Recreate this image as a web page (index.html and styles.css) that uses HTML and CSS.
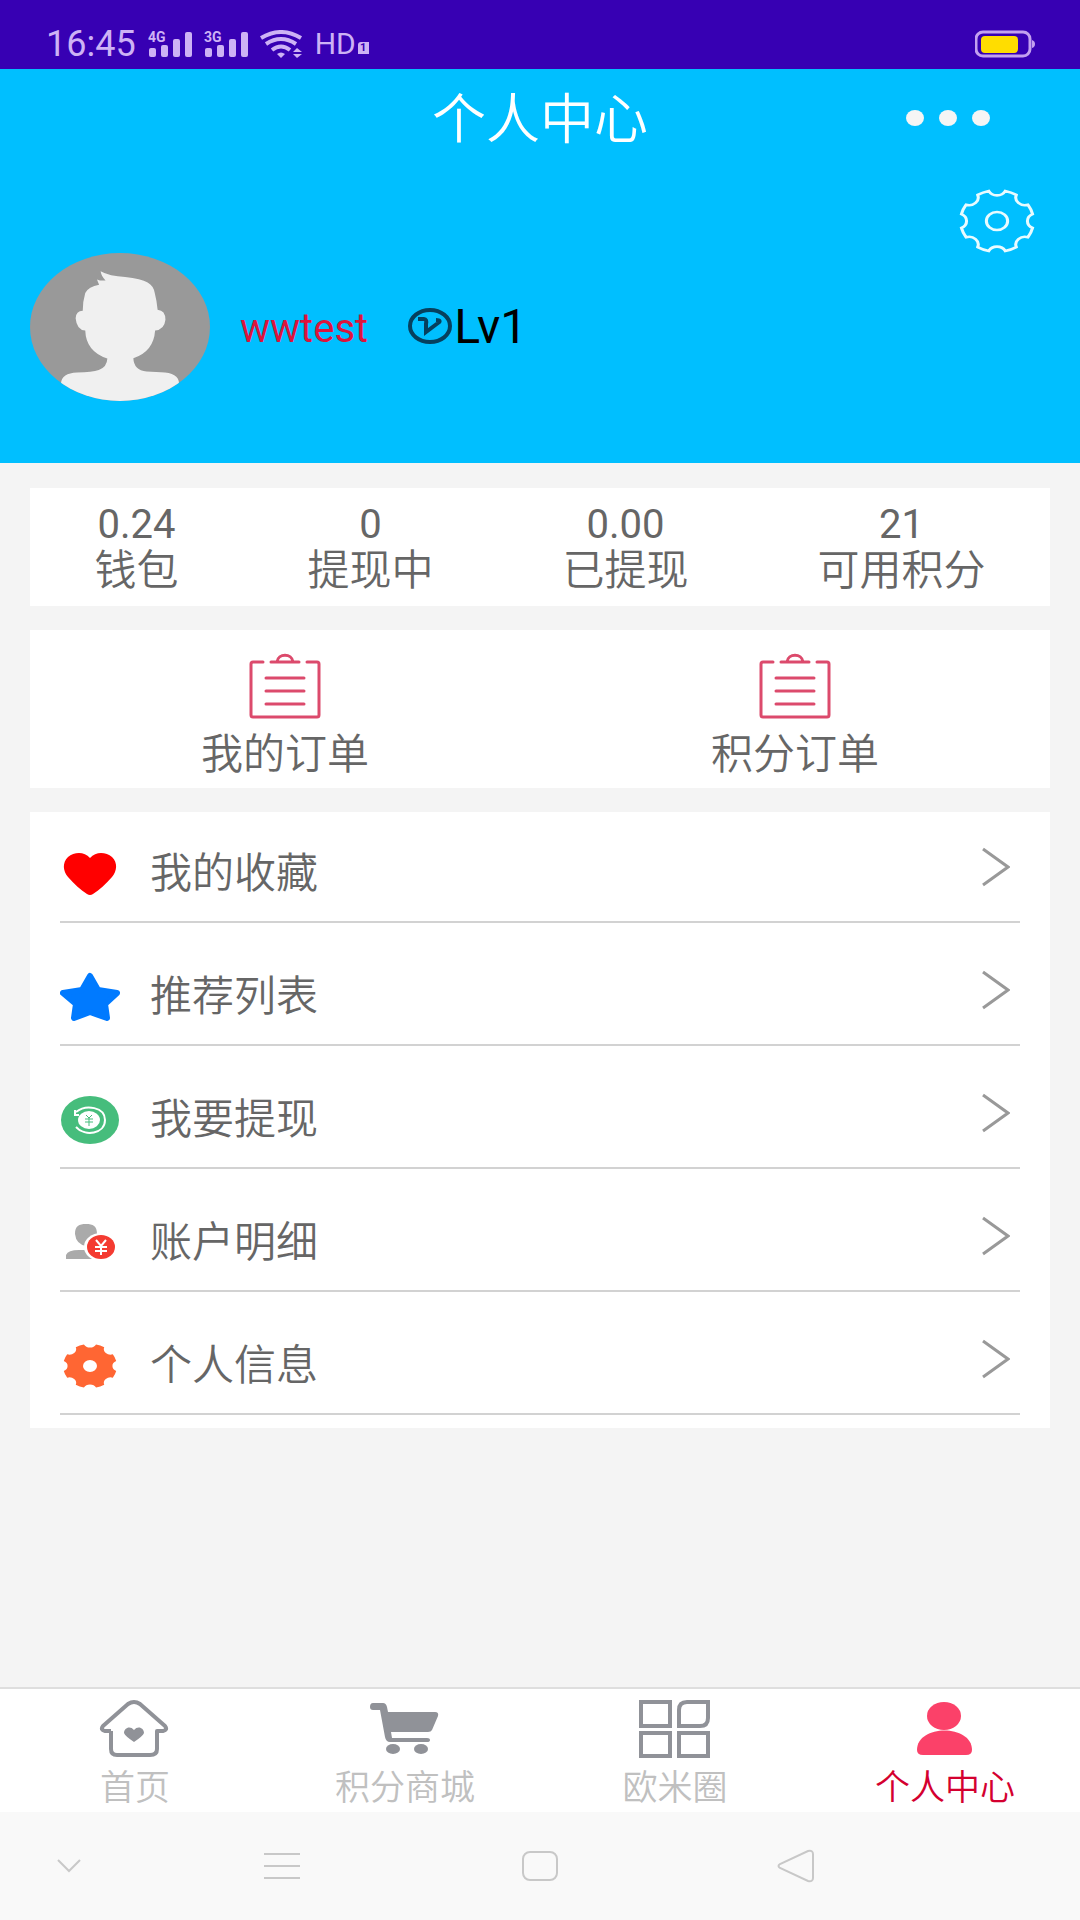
FILE: index.html
```html
<!DOCTYPE html>
<html lang="zh-CN">
<head>
<meta charset="utf-8">
<meta name="viewport" content="width=device-width, initial-scale=1">
<title>个人中心</title>
<link rel="stylesheet" href="styles.css">
</head>
<body>
<svg class="defs" aria-hidden="true">
  <symbol id="gear" viewBox="0 0 100 100" preserveAspectRatio="none">
    <path d="M60.8 3.2A48 48 0 0 1 75.4 9.3A12 12 0 0 0 90.7 24.6A48 48 0 0 1 96.8 39.2A12 12 0 0 0 96.8 60.8A48 48 0 0 1 90.7 75.4A12 12 0 0 0 75.4 90.7A48 48 0 0 1 60.8 96.8A12 12 0 0 0 39.2 96.8A48 48 0 0 1 24.6 90.7A12 12 0 0 0 9.3 75.4A48 48 0 0 1 3.2 60.8A12 12 0 0 0 3.2 39.2A48 48 0 0 1 9.3 24.6A12 12 0 0 0 24.6 9.3A48 48 0 0 1 39.2 3.2A12 12 0 0 0 60.8 3.2Z"/>
    <circle cx="50" cy="50" r="14"/>
  </symbol>
  <symbol id="clipboard" viewBox="0 0 72 66">
    <g fill="none" stroke="#dc4a6c" stroke-width="3" stroke-linecap="round" stroke-linejoin="round">
      <path d="M14 9H4Q2 9 2 11V62Q2 64 4 64H68Q70 64 70 62V11Q70 9 68 9H58M22 9H50M28 9C29 0 43 0 44 9M17 25H55M17 38H55M17 51H55"/>
    </g>
  </symbol>
  <symbol id="chevron" viewBox="0 0 28 40">
    <path d="M1 2L26 20L1 38" fill="none" stroke="#999" stroke-width="3"/>
  </symbol>
  <symbol id="signal" viewBox="0 0 44 28">
    <rect x="1" y="18" width="7" height="9" rx="2"/>
    <rect x="13" y="15" width="7" height="12" rx="2"/>
    <rect x="25" y="9" width="7" height="18" rx="2"/>
    <rect x="37" y="2" width="7" height="25" rx="2"/>
  </symbol>
</svg>

<header class="statusbar">
  <div class="status-left">
    <span class="clock">16:45</span>
    <svg class="signal" width="44" height="28" role="img" aria-label="4G"><use href="#signal"/><text x="0" y="12">4G</text></svg>
    <svg class="signal" width="44" height="28" role="img" aria-label="3G"><use href="#signal"/><text x="0" y="12">3G</text></svg>
    <svg class="wifi" width="43" height="28" viewBox="0 0 43 28" aria-label="Wi-Fi">
      <g fill="none" stroke="currentColor" stroke-width="4">
        <path d="M1 8Q21 -4 41 8M6 14Q21 4 36 14M12 20Q21 13 30 20"/>
      </g>
      <path d="M17 24Q21 21 25 24L21 28ZM33 22L37 18L42 22ZM33 24H42L37 28Z" fill="currentColor"/>
    </svg>
    <span class="hd">HD<span class="hd-slot">1</span></span>
  </div>
  <svg class="battery" width="60" height="28" viewBox="0 0 60 28" role="img" aria-label="电量">
    <rect x="1" y="2" width="54" height="24" rx="7" fill="none" stroke="#c3a0f0" stroke-width="3"/>
    <path d="M57 10Q60 11 60 14Q60 17 57 18Z" fill="#c3a0f0"/>
    <rect x="6" y="6" width="37" height="17" rx="4" fill="#ffdd00"/>
  </svg>
</header>

<section class="profile">
  <div class="titlebar">
    <h1>个人中心</h1>
    <button class="more" type="button" aria-label="更多">
      <svg width="86" height="16" viewBox="0 0 86 16" fill="#f5f5f5"><ellipse cx="10" cy="8" rx="9" ry="8"/><ellipse cx="43" cy="8" rx="9" ry="8"/><ellipse cx="76" cy="8" rx="9" ry="8"/></svg>
    </button>
  </div>
  <button class="settings" type="button" aria-label="设置">
    <svg width="76" height="64"><use href="#gear"/></svg>
  </button>
  <div class="user">
    <svg class="avatar" width="180" height="148" viewBox="83 70 505 443" preserveAspectRatio="none" role="img" aria-label="头像">
      <clipPath id="round"><ellipse cx="335.500" cy="291.500" rx="252.500" ry="221.500"/></clipPath>
      <g clip-path="url(#round)">
        <rect x="83" y="70" width="505" height="443" fill="#999"/>
        <path fill="#f0f0f0" d="M281 125Q306 140 350 142Q395 148 413 158Q430 168 433 190Q439 215 441 240Q463 242 463 270Q460 300 434 302Q430 365 373 385Q374 420 410 425L450 427Q500 428 501 460V520H170V460Q172 430 215 428Q258 426 276 420Q299 412 300 386Q240 365 238 302Q214 300 211 265Q212 244 231 243Q231 215 238 190Q247 170 277 165Q274 158 271 149Q282 154 295 152Q284 142 281 125Z"/>
      </g>
    </svg>
    <span class="username">wwtest</span>
    <span class="level">
      <svg width="44" height="38" viewBox="0 0 44 38" fill="none" stroke="#06405e"><ellipse cx="22" cy="18" rx="20" ry="16" stroke-width="4"/><path d="M10 11H16Q19 11 18 16L18 24L30 15Q34 12 28 12" stroke-width="4"/></svg>
      <span>Lv1</span>
    </span>
  </div>
</section>

<main>
  <section class="card stats">
    <a href="#wallet"><span class="amount">0.24</span><span>钱包</span></a>
    <a href="#pending"><span class="amount">0</span><span>提现中</span></a>
    <a href="#withdrawn"><span class="amount">0.00</span><span>已提现</span></a>
    <a href="#points"><span class="amount">21</span><span>可用积分</span></a>
  </section>

  <section class="card orders">
    <a href="#orders"><svg width="74" height="66"><use href="#clipboard"/></svg><span>我的订单</span></a>
    <a href="#point-orders"><svg width="74" height="66"><use href="#clipboard"/></svg><span>积分订单</span></a>
  </section>

  <ul class="card menu">
    <li><a href="#favorites">
      <svg class="icon" viewBox="0 0 60 50"><path fill="#f00" d="M30 9C36 2 46 3 52 8C58 14 57 22 52 28C46 35 39 41 33 45Q30 47 27 45C21 41 14 35 8 28C3 22 2 14 8 8C14 3 24 2 30 9Z"/></svg>
      <span class="label">我的收藏</span>
      <svg class="go" width="28" height="40"><use href="#chevron"/></svg>
    </a></li>
    <li><a href="#referrals">
      <svg class="icon" viewBox="0 0 60 50"><path fill="#007aff" stroke="#007aff" stroke-width="6" stroke-linejoin="round" d="M30 4L38 18L57 21L45 32L47 46L30 40L14 46L16 32L3 21L22 18Z"/></svg>
      <span class="label">推荐列表</span>
      <svg class="go" width="28" height="40"><use href="#chevron"/></svg>
    </a></li>
    <li><a href="#withdraw">
      <svg class="icon" viewBox="0 0 60 50"><ellipse cx="30" cy="25" rx="29" ry="24" fill="#46bd7c"/><ellipse cx="29" cy="25" rx="11" ry="9" fill="#fff"/><path d="M16 17C26 9 45 12 45 25C45 39 25 42 16 32M15 15V20H19" fill="none" stroke="#fff" stroke-width="2"/><path d="M26 20L29 23L32 20M25 24H33M25 27H33M29 23V31" fill="none" stroke="#46bd7c" stroke-width="1"/></svg>
      <span class="label">我要提现</span>
      <svg class="go" width="28" height="40"><use href="#chevron"/></svg>
    </a></li>
    <li><a href="#details">
      <svg class="icon" viewBox="0 0 60 50"><path fill="#aaa" d="M15 16C15 8 19 6 26 6C33 6 37 8 37 16Q36 28 26 28Q16 26 15 16ZM6 41V37Q8 32 19 32H34V41Z"/><ellipse cx="41" cy="29" rx="17" ry="14" fill="#fff"/><ellipse cx="41" cy="29" rx="14" ry="12" fill="#f43b31"/><path d="M36 22L41 28L46 22M35 29H47M35 33H47M41 28V37" fill="none" stroke="#fff" stroke-width="2"/></svg>
      <span class="label">账户明细</span>
      <svg class="go" width="28" height="40"><use href="#chevron"/></svg>
    </a></li>
    <li><a href="#info">
      <svg class="icon" viewBox="0 0 60 50"><use class="gear-fill" href="#gear" x="2" y="2" width="56" height="46"/><ellipse cx="30" cy="25" rx="7" ry="6" fill="#fff"/></svg>
      <span class="label">个人信息</span>
      <svg class="go" width="28" height="40"><use href="#chevron"/></svg>
    </a></li>
  </ul>
</main>

<nav class="tabs">
  <a href="#home">
    <svg viewBox="0 0 72 60"><path fill="none" stroke="#909298" stroke-width="4" stroke-linejoin="round" d="M12 32H6Q1 31 4 27L29 5Q35 1 41 5L66 27Q69 31 64 32H58V50Q58 56 51 56H18Q12 56 12 50V32"/><path fill="#909298" d="M35 31C39 26 45 29 45 34Q44 37 35 43Q26 37 25 34C25 29 31 26 35 31Z"/></svg>
    <span>首页</span>
  </a>
  <a href="#mall">
    <svg viewBox="0 0 72 60" fill="#909298"><path d="M4 4H14Q17 4 18 8L19 13H66Q70 13 69 17L63 31Q62 33 59 33H22L23 39H58Q61 39 61 41Q61 43 58 43H21Q17 43 16 38L11 11H4Q1 11 1 8Q1 4 4 4Z"/><ellipse cx="24" cy="50" rx="7" ry="5"/><ellipse cx="52" cy="50" rx="7" ry="5"/></svg>
    <span>积分商城</span>
  </a>
  <a href="#circle">
    <svg viewBox="0 0 72 60" fill="none" stroke="#909298" stroke-width="4"><rect x="2" y="3" width="29" height="24"/><path d="M40 11Q40 3 48 3H69V19Q69 27 61 27H40Z"/><rect x="2" y="34" width="29" height="23"/><rect x="40" y="34" width="29" height="23"/></svg>
    <span>欧米圈</span>
  </a>
  <a class="active" href="#me">
    <svg viewBox="0 0 72 60" fill="#fb4169"><ellipse cx="35" cy="17" rx="17" ry="14"/><path d="M8 51C8 25 63 25 63 51Q63 56 57 56H14Q8 56 8 51Z"/></svg>
    <span>个人中心</span>
  </a>
</nav>

<footer class="sysnav">
  <button type="button" aria-label="收起"><svg width="26" height="16" viewBox="0 0 26 16"><path d="M2 2L13 13L24 2"/></svg></button>
  <button type="button" aria-label="菜单"><svg width="36" height="30" viewBox="0 0 36 30"><path d="M0 3H36M0 15H36M0 27H36"/></svg></button>
  <button type="button" aria-label="主屏幕"><svg width="38" height="32" viewBox="0 0 38 32"><rect x="2" y="2" width="34" height="28" rx="7"/></svg></button>
  <button type="button" aria-label="返回"><svg width="38" height="34" viewBox="0 0 38 34"><path d="M3 15Q0 17 3 19L31 32Q36 33 36 29V5Q36 1 31 2Z"/></svg></button>
</footer>
</body>
</html>
```
FILE: styles.css
```css
* {
  box-sizing: border-box;
}

body {
  margin: 0;
  min-height: 100vh;
  display: flex;
  flex-direction: column;
  background: #f4f4f4;
  color: #666;
  font-family: Roboto, "Noto Sans CJK SC", sans-serif;
  font-size: 42px;
  font-weight: 350;
  line-height: 46px;
}

a {
  color: inherit;
  text-decoration: none;
}

button {
  display: flex;
  padding: 0;
  border: 0;
  background: none;
}

svg {
  display: block;
  flex: none;
}

.defs {
  position: absolute;
  width: 0;
  height: 0;
}

/* status bar */
.statusbar {
  display: flex;
  justify-content: space-between;
  height: 69px;
  padding: 30px 45px 0 46px;
  background: #3700b3;
  color: #cdb2f5;
}

.status-left {
  display: flex;
  align-items: center;
  gap: 12px;
  height: 28px;
}

.clock {
  font-size: 36px;
  font-weight: 400;
}

.signal {
  fill: currentColor;
}

.signal text {
  font-size: 14px;
  font-weight: 700;
}

.hd {
  display: flex;
  align-items: flex-end;
  gap: 2px;
  font-size: 30px;
  font-weight: 400;
  line-height: 30px;
}

.hd-slot {
  width: 11px;
  margin-bottom: 5px;
  border-radius: 3px 0 0 0;
  background: currentColor;
  font-size: 11px;
  font-weight: 700;
  line-height: 12px;
  text-align: center;
}

.hd-slot::first-letter {
  color: #3700b3;
}

/* profile header */
.profile {
  display: flex;
  flex-direction: column;
  padding-bottom: 62px;
  background: #00bfff;
}

.titlebar {
  display: grid;
  grid-template-columns: 1fr auto 1fr;
  align-items: center;
  height: 98px;
}

.titlebar h1 {
  grid-column: 2;
  margin: 0;
  padding-top: 5px;
  color: #fff;
  font-size: 54px;
  font-weight: 350;
  line-height: 60px;
}

.more {
  justify-self: end;
  margin-right: 89px;
}

.settings {
  align-self: flex-end;
  margin: 22px 45px 0 0;
  fill: none;
  stroke: #e8fbff;
  stroke-width: 4px;
}

.user {
  display: flex;
  align-items: center;
  padding-left: 30px;
}

.username {
  margin-left: 30px;
  padding-top: 4px;
  color: #dc143c;
  font-size: 40px;
  font-weight: 400;
}

.level {
  display: flex;
  align-items: center;
  gap: 2px;
  margin-left: 40px;
  color: #000;
  font-size: 48px;
  font-weight: 400;
}

/* cards */
main {
  flex: 1;
  display: flex;
  flex-direction: column;
  gap: 24px;
  padding: 25px 30px;
}

.card {
  margin: 0;
  background: #fff;
}

.stats {
  display: flex;
  justify-content: space-around;
  padding: 14px 0 12px;
}

.amount {
  font-size: 40px;
  font-weight: 400;
}

.stats a,
.orders a {
  display: flex;
  flex-direction: column;
  align-items: center;
}

.orders {
  display: grid;
  grid-template-columns: 1fr 1fr;
  padding: 23px 0 10px;
}

.orders a {
  gap: 13px;
}

/* menu list */
.menu {
  display: flex;
  flex-direction: column;
  gap: 12px;
  padding: 0 30px 13px;
  list-style: none;
}

.menu a {
  display: flex;
  align-items: center;
  height: 111px;
  padding-right: 10px;
  border-bottom: 2px solid #d2d2d2;
}

.icon {
  width: 60px;
  height: 50px;
  margin-top: 14px;
}

.gear-fill {
  fill: #ff6633;
}

.label {
  flex: 1;
  margin: 14px 0 0 30px;
}

/* tab bar */
.tabs {
  display: grid;
  grid-template-columns: repeat(4, 1fr);
  padding: 10px 0 0;
  border-top: 2px solid #dedede;
  background: #fff;
  color: #c0c0c0;
  font-size: 35px;
}

.tabs a {
  display: flex;
  flex-direction: column;
  align-items: center;
  gap: 7px;
}

.tabs svg {
  width: 72px;
  height: 60px;
}

.tabs .active {
  color: #d4002f;
}

/* system navigation */
.sysnav {
  display: grid;
  grid-template-columns: 138fr 288fr 228fr 284fr 142fr;
  align-items: center;
  justify-items: center;
  height: 108px;
  background: #f9f9f9;
}

.sysnav svg {
  fill: none;
  stroke: #c8c8c8;
  stroke-width: 2px;
}
```
